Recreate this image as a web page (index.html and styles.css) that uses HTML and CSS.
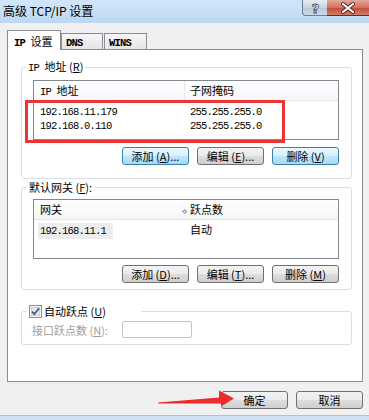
FILE: index.html
```html
<!DOCTYPE html>
<html lang="zh-CN">
<head>
    <meta charset="UTF-8">
    <title>高级 TCP/IP 设置</title>
    <link rel="stylesheet" href="styles.css">
</head>
<body>
    <div class="titlebar">
        <span class="title">高级 TCP/IP 设置</span>
        <div class="caption">
            <span class="cap-btn help">
                <svg width="25" height="16" viewBox="0 0 25 16">
                    <text x="12.5" y="13" text-anchor="middle" class="cap-glyph">?</text>
                </svg>
            </span>
            <span class="cap-btn close">
                <svg width="42" height="16" viewBox="0 0 42 16">
                    <path d="M16 4 L26 12 M26 4 L16 12" stroke="#4a2020" stroke-width="4" stroke-linecap="round"/>
                    <path d="M16 4 L26 12 M26 4 L16 12" stroke="#fff" stroke-width="2.2" stroke-linecap="round"/>
                </svg>
            </span>
        </div>
    </div>

    <div class="dialog">
        <div class="tabs">
            <div class="tab active"><span class="mono b">IP </span>设置</div>
            <div class="tab"><span class="mono b">DNS</span></div>
            <div class="tab wins"><span class="mono b">WINS</span></div>
        </div>

        <div class="panel">
            <!-- IP addresses -->
            <fieldset class="group g-ip">
                <legend><span class="mono">IP </span>地址 (<u>R</u>)</legend>
                <div class="listbox">
                    <div class="lv-head">
                        <div class="col c1"><span class="mono">IP </span>地址</div>
                        <div class="col c2">子网掩码</div>
                    </div>
                    <div class="lv-body">
                        <div class="lv-row">
                            <div class="col c1 mono">192.168.11.179</div>
                            <div class="col c2 mono">255.255.255.0</div>
                        </div>
                        <div class="lv-row">
                            <div class="col c1 mono">192.168.0.110</div>
                            <div class="col c2 mono">255.255.255.0</div>
                        </div>
                    </div>
                </div>
                <div class="btn-row">
                    <button class="btn hot">添加 (<u>A</u>)...</button>
                    <button class="btn">编辑 (<u>E</u>)...</button>
                    <button class="btn hot">删除 (<u>V</u>)</button>
                </div>
            </fieldset>

            <!-- default gateways -->
            <fieldset class="group g-gw">
                <legend>默认网关 (<u>F</u>):</legend>
                <div class="listbox">
                    <div class="lv-head">
                        <div class="col c1 nodiv">网关</div>
                        <div class="col c2"><span class="sort">⟡</span>跃点数</div>
                    </div>
                    <div class="lv-body gw">
                        <div class="lv-row tall">
                            <div class="col c1"><span class="sel mono">192.168.11.1</span></div>
                            <div class="col c2">自动</div>
                        </div>
                    </div>
                </div>
                <div class="btn-row">
                    <button class="btn">添加 (<u>D</u>)...</button>
                    <button class="btn">编辑 (<u>T</u>)...</button>
                    <button class="btn">删除 (<u>M</u>)</button>
                </div>
            </fieldset>

            <!-- metric -->
            <fieldset class="group g-metric">
                <legend>
                    <svg class="check" width="13" height="13" viewBox="0 0 13 13">
                        <rect x="0.5" y="0.5" width="12" height="12" fill="#f4f4f4" stroke="#8e8f8f"/>
                        <rect x="2.5" y="2.5" width="8" height="8" fill="#e6e6e6" stroke="#d0d0d0"/>
                        <path d="M3 6.5 L5.3 9.2 L10 3.2" fill="none" stroke="#3e5a93" stroke-width="1.8"/>
                    </svg>
                    <span>自动跃点 (<u>U</u>)</span>
                </legend>
                <div class="metric-row">
                    <span class="disabled">接口跃点数 (<u>N</u>):</span>
                    <span class="input"></span>
                </div>
            </fieldset>
        </div>

        <div class="footer">
            <button class="btn">确定</button>
            <button class="btn">取消</button>
        </div>
    </div>
    <div class="taskbar"></div>

    <!-- red annotations drawn over the dialog -->
    <div class="mark-box"></div>
    <svg class="mark-arrow" width="90" height="30" viewBox="150 388 90 30">
        <polygon points="158,402.5 219,397.5 219,390.5 234,398.5 221,406.5 221,403.5 158,403.5" fill="#ee2b2b"/>
    </svg>
</body>
</html>
```

FILE: styles.css
```css
* {
    margin: 0;
    padding: 0;
    box-sizing: border-box;
}

body {
    position: relative;
    width: 369px;
    height: 420px;
    overflow: hidden;
    background: #f0f0f0;
    font-family: "Noto Sans CJK SC", "Liberation Sans", sans-serif;
    font-size: 11px;
    color: #000;
}

.mono {
    font-family: "Liberation Mono", "Noto Sans CJK SC", monospace;
    font-size: 10.5px;
    letter-spacing: -0.8px;
    white-space: pre;
}

.mono.b {
    font-weight: bold;
}

u {
    text-decoration: underline;
}

/* title bar */
.titlebar {
    height: 23px;
    display: flex;
    align-items: flex-start;
    background: linear-gradient(to bottom, #d3e6f9, #bcd7f2);
}

.title {
    font-size: 12px;
    line-height: 22px;
    padding-left: 3px;
    flex: 1;
}

.caption {
    display: flex;
}

.cap-btn {
    display: block;
    height: 16px;
}

.cap-btn svg {
    display: block;
}

.help {
    width: 25px;
    border: 1px solid #6f7f92;
    border-top: none;
    border-right: none;
    border-bottom-left-radius: 4px;
    background: linear-gradient(to bottom, #e6edf5, #c9d5e3 50%, #b8c7d8 51%, #cdd9e6);
}

.cap-glyph {
    font-family: "DejaVu Sans", sans-serif;
    font-size: 13px;
    font-weight: bold;
    fill: #fff;
    stroke: #3a4656;
    stroke-width: 0.8px;
}

.close {
    width: 42px;
    border-bottom: 1px solid #6b2a22;
    background: linear-gradient(to bottom, #e5a89c, #d26f5e 50%, #c24a37 51%, #d47b66);
}

/* dialog body */
.dialog {
    height: 392px;
    padding: 7px 6px 0 7px;
}

.tabs {
    display: flex;
    align-items: flex-end;
    height: 19px;
}

.tab {
    height: 16px;
    line-height: 15px;
    padding-left: 4px;
    border: 1px solid #898c95;
    border-bottom: none;
    background: linear-gradient(to bottom, #f6f6f6, #e5e5e5);
    width: 42px;
}

.tab.wins {
    width: 43px;
    margin-left: 1px;
}

.tab.active {
    position: relative;
    z-index: 1;
    width: 54px;
    height: 20px;
    margin-bottom: -1px;
    padding: 3px 0 0 6px;
    background: #fff;
}

.panel {
    height: 333px;
    border: 1px solid #898c95;
    background: #fff;
    padding: 9px 10px 0 13px;
}

/* group boxes */
.group {
    border: 1px solid #d5dfe5;
    border-radius: 3px;
    padding: 0 12px 0 11px;
    min-width: 0;
}

.group legend {
    margin-left: -7px;
    padding: 0 2px;
    line-height: 14px;
}

.g-ip {
    padding-bottom: 13px;
}

.g-gw {
    margin-top: 1px;
    padding-bottom: 6px;
}

.g-gw legend {
    margin-left: -6px;
}

.g-metric {
    margin-top: 14px;
    padding: 0 10px 6px 10px;
}

.g-metric legend {
    display: flex;
    align-items: center;
    width: 114px;
    margin-left: -5px;
}

.check {
    display: block;
    margin-right: 2px;
}

.listbox {
    margin-top: 5px;
    height: 60px;
    border: 1px solid #828790;
    background: #fff;
}

.lv-head {
    display: flex;
    height: 20px;
    line-height: 19px;
    border-bottom: 1px solid #e3e6ea;
    background: linear-gradient(to bottom, #ffffff, #f4f6f9);
}

.col.c1 {
    width: 151px;
    padding-left: 6px;
}

.lv-head .c1 {
    border-right: 1px solid #e3e6ea;
}

.lv-head .c1.nodiv {
    border-right: none;
}

.col.c2 {
    padding-left: 5px;
}

.sort {
    display: inline-block;
    width: 8px;
    margin-left: -8px;
    font-size: 8px;
    color: #7a8798;
}

.lv-body {
    padding-top: 4px;
}

.lv-row {
    display: flex;
    height: 14px;
    line-height: 14px;
}

.lv-body.gw {
    padding-top: 1px;
}

.lv-row.tall {
    height: 16px;
    line-height: 16px;
}

.lv-row.tall .c1 {
    padding-left: 4px;
}

.sel {
    display: inline-block;
    padding: 0 7px 0 2px;
    background: #ececec;
}

/* buttons */
.btn-row {
    display: flex;
    justify-content: flex-end;
    gap: 8px;
    margin-top: 7px;
}

.g-gw .btn-row {
    margin-top: 6px;
}

.btn {
    width: 67px;
    height: 18px;
    font: inherit;
    line-height: 16px;
    color: #000;
    border: 1px solid #707070;
    border-radius: 3px;
    background: linear-gradient(to bottom, #f2f2f2, #ebebeb 50%, #dddddd 51%, #cfcfcf);
}

.btn.hot {
    border-color: #3c7fb1;
    background: linear-gradient(to bottom, #eaf6fd, #d9f0fc 50%, #bee6fd 51%, #a7d9f5);
}

/* metric row */
.metric-row {
    display: flex;
    align-items: center;
    margin-top: 3px;
}

.disabled {
    width: 90px;
    color: #9d9d9d;
}

.input {
    width: 70px;
    height: 17px;
    border: 1px solid #c4c4c4;
    border-radius: 2px;
    background: #fff;
}

.footer {
    display: flex;
    justify-content: flex-end;
    gap: 8px;
    margin-top: 9px;
}

.taskbar {
    height: 5px;
    border-top: 1px solid #a9c3df;
    background: #cfe1f5;
}

/* annotations */
.mark-box {
    position: absolute;
    left: 25px;
    top: 100px;
    width: 260px;
    height: 43px;
    border: 3px solid #ec3434;
}

.mark-arrow {
    position: absolute;
    left: 150px;
    top: 388px;
}
```
